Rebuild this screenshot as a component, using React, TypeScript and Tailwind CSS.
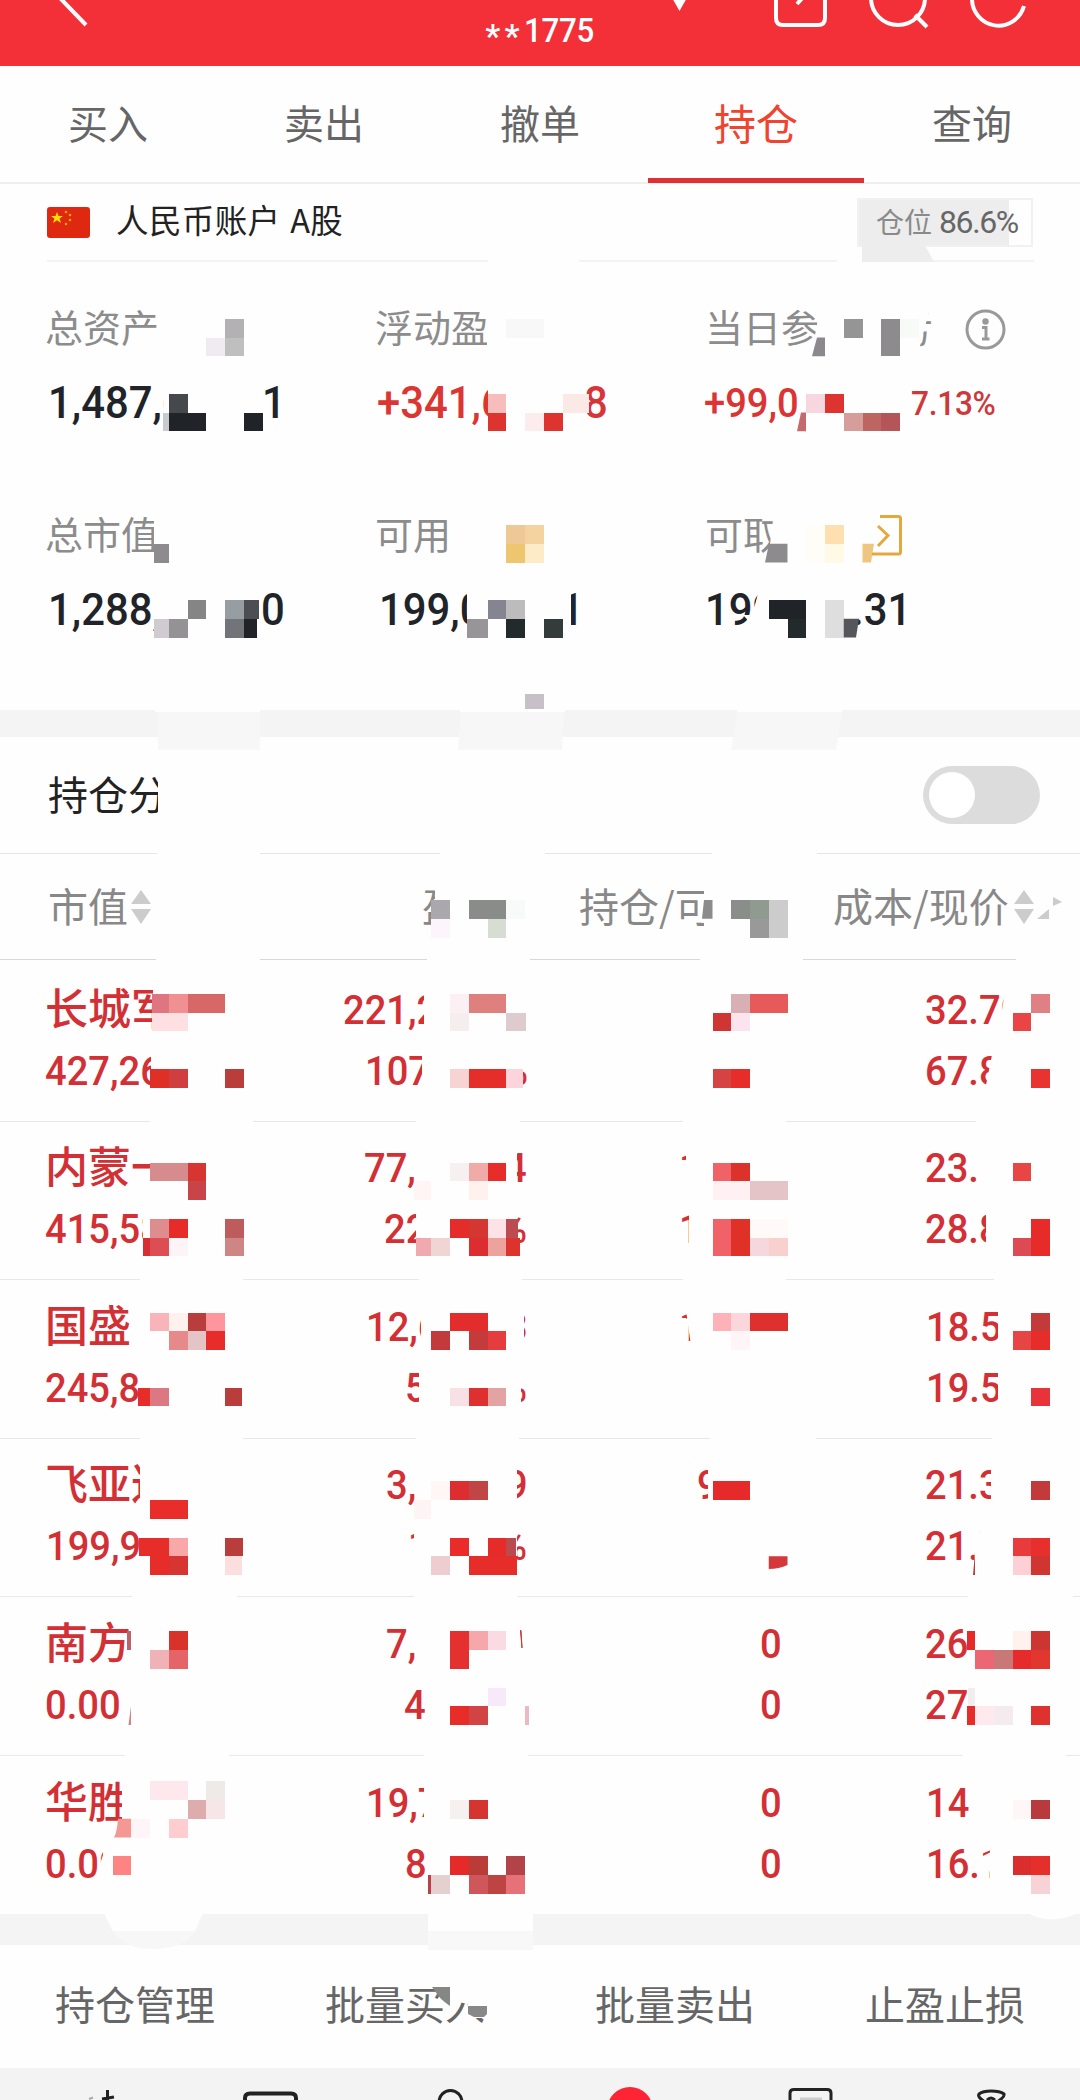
import React from "react";

type Piece = { t: string; c: string };
type Tile = [col: number, row: number, w: number, h: number, color: string];

const CELL = 18.75;

/* Text pieces share one grid cell; each is offset by a margin and cut to a width. */
function Line({ pieces, className, narrow }: { pieces: Piece[]; className: string; narrow?: boolean }) {
  return (
    <div className={"grid items-center " + className}>
      {pieces.map((p, i) => (
        <span key={i} className={"[grid-area:1/1] overflow-hidden whitespace-nowrap " + p.c}>
          {narrow ? <span className="inline-block origin-left scale-x-[0.93]">{p.t}</span> : p.t}
        </span>
      ))}
    </div>
  );
}

const cjk = "font-['Noto_Sans_CJK_SC',sans-serif]";
const num = "font-['Roboto','Noto_Sans_CJK_SC',sans-serif] font-medium";

const tabs = ["买入", "卖出", "撤单", "持仓", "查询"];
const actions = ["持仓管理", "批量买入", "批量卖出", "止盈止损"];

const holdings: { h: string; name: Piece; top: Piece[]; bottom: Piece[] }[] = [
  {
    h: "h-[162px] border-b",
    name: { t: "长城军工", c: "ml-[45px] w-[108px]" },
    top: [
      { t: "221,2", c: "ml-[343px] w-[81px]" },
      { t: "32.70", c: "ml-[925px] w-[80px]" },
    ],
    bottom: [
      { t: "427,26", c: "ml-[45px] w-[106px]" },
      { t: "107", c: "ml-[365px] w-[57px]" },
      { t: "%", c: "ml-[500px] w-[30px]" },
      { t: "67.8", c: "ml-[925px] w-[67px]" },
    ],
  },
  {
    h: "h-[158px] border-b",
    name: { t: "内蒙一", c: "ml-[45px] w-[105px]" },
    top: [
      { t: "77,", c: "ml-[364px] w-[56px]" },
      { t: "4", c: "ml-[505px] w-[24px]" },
      { t: "1", c: "ml-[679px] w-[7px]" },
      { t: "23.", c: "ml-[925px] w-[60px]" },
    ],
    bottom: [
      { t: "415,58", c: "ml-[45px] w-[98px]" },
      { t: "22", c: "ml-[384px] w-[32px]" },
      { t: "%", c: "ml-[499px] w-[30px]" },
      { t: "1", c: "ml-[679px] w-[10px]" },
      { t: "28.8", c: "ml-[925px] w-[61px]" },
    ],
  },
  {
    h: "h-[159px] border-b",
    name: { t: "国盛", c: "ml-[45px] w-[90px]" },
    top: [
      { t: "12,6", c: "ml-[366px] w-[55px]" },
      { t: "3", c: "ml-[506px] w-[24px]" },
      { t: "1", c: "ml-[679px] w-[14px]" },
      { t: "18.5", c: "ml-[926px] w-[72px]" },
    ],
    bottom: [
      { t: "245,8", c: "ml-[45px] w-[94px]" },
      { t: "5", c: "ml-[405px] w-[14px]" },
      { t: "%", c: "ml-[499px] w-[30px]" },
      { t: "19.5", c: "ml-[926px] w-[72px]" },
    ],
  },
  {
    h: "h-[158px] border-b",
    name: { t: "飞亚达", c: "ml-[45px] w-[95px]" },
    top: [
      { t: "3,", c: "ml-[386px] w-[40px]" },
      { t: "9", c: "ml-[506px] w-[24px]" },
      { t: "9", c: "ml-[697px] w-[11px]" },
      { t: "21.3", c: "ml-[925px] w-[66px]" },
    ],
    bottom: [
      { t: "199,9", c: "ml-[46px] w-[94px]" },
      { t: "1", c: "ml-[408px] w-[6px]" },
      { t: "%", c: "ml-[499px] w-[30px]" },
      { t: "21.7", c: "ml-[925px] w-[55px]" },
    ],
  },
  {
    h: "h-[159px] border-b",
    name: { t: "南方", c: "ml-[45px] w-[84px]" },
    top: [
      { t: "7,", c: "ml-[386px] w-[40px]" },
      { t: "0", c: "ml-[760px] w-[28px]" },
      { t: "26", c: "ml-[925px] w-[46px]" },
    ],
    bottom: [
      { t: "0.00", c: "ml-[45px] w-[80px]" },
      { t: "4", c: "ml-[404px] w-[24px]" },
      { t: "0", c: "ml-[760px] w-[28px]" },
      { t: "27", c: "ml-[925px] w-[46px]" },
    ],
  },
  {
    h: "h-[158px]",
    name: { t: "华胜", c: "ml-[45px] w-[77px]" },
    top: [
      { t: "19,7", c: "ml-[366px] w-[58px]" },
      { t: "0", c: "ml-[760px] w-[28px]" },
      { t: "14", c: "ml-[926px] w-[46px]" },
    ],
    bottom: [
      { t: "0.00", c: "ml-[45px] w-[58px]" },
      { t: "8", c: "ml-[405px] w-[24px]" },
      { t: "0", c: "ml-[760px] w-[28px]" },
      { t: "16.1", c: "ml-[926px] w-[64px]" },
    ],
  },
];

/* Mosaic cells, in units of CELL. */
const tiles: Tile[] = [
  [12, 17, 1, 1, "#b3b1b3"], [11, 18, 1, 1, "#f0ebf0"], [12, 18, 1, 1, "#c0bfc0"],
  [9, 21, 1, 1, "#45484d"], [8.68, 22, 0.32, 1, "#c9cace"], [9, 22, 2, 1, "#202429"], [13, 22, 1, 1, "#202429"],
  [27, 17, 2, 1, "#f8f8f8"],
  [26, 21, 1, 1, "#f7bcbc"], [26, 22, 1, 1, "#dd3430"], [28, 22, 1, 1, "#fdecee"], [29, 22, 1, 1, "#dd3430"], [30, 21, 1.4, 1, "#fbe9e5"],
  [45, 17, 1, 1, "#949594"], [47, 17, 1, 2, "#8e8b8f"], [48, 17, 1, 1, "#f7faf6"],
  [43, 21, 1, 1, "#f8d6e0"], [44, 21, 1, 1, "#dd3430"],
  [45, 22, 1, 1, "#d69e9b"], [46, 22, 1, 1, "#bd6560"], [47, 22, 1, 1, "#b4555a"],
  [8.2, 29, 0.8, 1, "#8e8b8f"],
  [27, 28, 1, 1, "#eec896"], [28, 28, 1, 1, "#f5d3a0"], [27, 29, 1, 1, "#eec670"], [28, 29, 1, 1, "#fdebc8"],
  [44, 28, 1, 1, "#fee0b0"], [43, 28, 1, 2, "#fffdf8"], [44, 29, 1, 1, "#fff9e6"],
  [10, 32, 1, 1, "#848584"], [8.2, 33, 0.8, 1, "#d0cbd0"], [9, 33, 1, 1, "#959295"],
  [12, 32, 1, 1, "#969da3"], [13, 32, 0.8, 1, "#4c4e54"], [12, 33, 1, 1, "#727479"], [13, 33, 0.7, 1, "#202429"],
  [26, 32, 1, 1, "#858592"], [27, 32, 1, 1, "#bcbcbc"], [24.9, 33, 1.1, 1, "#989598"], [27, 33, 1, 1, "#232a2b"], [29, 33, 1, 1, "#343b3b"],
  [41, 32, 2, 1, "#202429"], [42, 33, 1, 1, "#232a2b"], [44, 32, 1, 2, "#dededf"],
  [28, 37, 1, 1, "#c8c0c8"],
  [23, 48, 1, 1, "#aba8ad"], [25, 48, 2, 1, "#8a8c89"], [26, 49, 1, 1, "#d7ddd3"], [27, 48, 1, 1, "#f7faf8"], [23, 49, 1, 1, "#fcf6fc"],
  [39, 48, 1, 1, "#8b8d8b"], [40, 48, 1, 1, "#909b90"], [41, 48, 1, 2, "#cccccc"], [40, 49, 1, 1, "#999999"],
  [8.1, 53, 0.9, 1, "#de7580"], [9, 53, 1, 1, "#f09092"], [10, 53, 2, 1, "#d86868"], [8.1, 54, 1.9, 1, "#fee0e3"],
  [8, 57, 1, 1, "#df3028"], [9, 57, 1, 1, "#d03e40"], [12, 57, 1, 1, "#b93e3b"],
  [24, 53, 1, 1, "#fdf0f4"], [25, 53, 2, 1, "#de807d"], [24, 54, 1, 1, "#f4eeef"], [27, 54, 1.05, 1, "#decbcd"],
  [24, 57, 1, 1, "#f7d3d4"], [25, 57, 2, 1, "#e52d29"], [27, 57, 0.9, 1, "#fbd4dc"],
  [39, 53, 1, 1, "#d8b0b4"], [40, 53, 2, 1, "#e65a59"], [38, 54, 1, 1, "#cf3633"], [39, 54, 1, 1, "#fce4ee"],
  [38, 57, 1, 1, "#d64343"], [39, 57, 1, 1, "#e62d29"],
  [55, 53, 1, 1, "#df8184"], [54, 54, 1, 1, "#ea4445"], [55, 57, 1, 1, "#e93330"],
  [8, 62, 2, 1, "#d68c8c"], [10, 62, 1, 1, "#d63531"], [10, 63, 1, 1, "#c94448"],
  [8, 65, 1, 1, "#de8c8e"], [9, 65, 1, 1, "#e52c28"], [7.6, 66, 0.4, 1, "#d52f33"], [8, 66, 1, 1, "#dd4d54"], [9, 66, 1, 1, "#fdf4f7"],
  [12, 65, 1, 1, "#be5b5c"], [12, 66, 1, 1, "#ce8684"],
  [24, 62, 1, 1, "#f6f0f1"], [25, 62, 1, 1, "#f0aba8"], [26, 62, 1, 1, "#e62d29"], [25, 63, 1, 1, "#fff1ee"], [22.1, 63, 0.9, 1, "#fff5f5"],
  [24, 65, 1, 1, "#e42c2a"], [25, 65, 1, 1, "#d43632"], [26, 65, 1, 1, "#fde3e7"], [27, 65, 0.6, 1, "#bb4c52"],
  [22.2, 66, 0.8, 1, "#f0a9ae"], [23, 66, 1, 1, "#efd5d4"], [25, 66, 1, 1, "#dc2e30"], [26, 66, 1, 1, "#eda39d"], [27, 66, 0.73, 1, "#dc332d"],
  [38, 62, 1, 1, "#f06267"], [39, 62, 1, 1, "#db322b"], [38, 63, 2, 1, "#fff0f3"], [40, 63, 2, 1, "#e5c4c8"],
  [38, 65, 1, 2, "#f06267"], [39, 65, 1, 2, "#e03128"], [40, 65, 2, 1, "#fff9f8"], [40, 66, 1, 1, "#f6d7de"], [41, 66, 1, 1, "#f8d0cd"],
  [54, 62, 1, 1, "#e74645"], [55, 65, 1, 2, "#e72b28"], [54, 66, 1, 1, "#dc4b53"],
  [8, 70, 1, 1, "#f8b4b8"], [9, 70, 1, 1, "#fff1ed"], [10, 70, 1, 1, "#b93e3b"], [11, 70, 1, 1, "#ff959d"],
  [9, 71, 1, 1, "#e6898b"], [10, 71, 1, 1, "#e5c4c6"], [11, 71, 1, 1, "#e62d29"],
  [7.38, 74, 0.62, 1, "#e62d29"], [8, 74, 1, 1, "#dc7882"], [12, 74, 0.9, 1, "#b93e3b"],
  [24, 70, 2, 1, "#e32d2c"], [23, 71, 1, 1, "#c23a3c"], [25, 71, 1, 1, "#c43b3c"], [26, 71, 1, 1, "#e53d3e"],
  [24, 74, 1, 1, "#f7e1e4"], [25, 74, 1, 1, "#de302f"], [26, 74, 1, 1, "#e3a3a3"],
  [38, 70, 1, 1, "#fdb2b8"], [39, 70, 1, 1, "#fbd7dc"], [40, 70, 2, 1, "#dd302f"], [39, 71, 1, 1, "#fff5f6"],
  [55, 70, 1, 1, "#c23b3a"], [54, 71, 1, 1, "#e74543"], [55, 71, 1, 1, "#e62d29"], [55, 74, 1, 1, "#e9333b"],
  [8, 80, 2, 1, "#e82d2a"], [7.4, 82, 1.6, 1, "#e62d29"], [9, 82, 1, 1, "#f8a8a8"], [8, 83, 1, 1, "#e62d29"], [9, 83, 1, 1, "#d63531"],
  [12, 82, 0.95, 1, "#b93e3b"], [12, 83, 0.9, 1, "#fcdedf"],
  [23, 79, 1, 1, "#fff6f6"], [24, 79, 1, 1, "#dc2e30"], [25, 79, 1, 1, "#c04544"], [22.1, 80, 0.9, 1, "#fdf4f4"],
  [24, 82, 1, 1, "#e92b29"], [26, 82, 1, 1, "#e52c28"], [27, 82, 0.52, 1, "#ba4a4e"], [25, 83, 2.55, 1, "#e62d29"], [23, 83, 1, 1, "#edcdd0"],
  [38, 79, 2, 1, "#e52a29"],
  [55, 79, 1, 1, "#c33a3a"], [54, 82, 1, 1, "#e83b3c"], [55, 82, 1, 1, "#e7302d"], [54, 83, 1, 1, "#fed0d6"], [55, 83, 1, 1, "#cf3531"],
  [6.78, 87, 0.2, 1, "#b96467"], [9, 87, 1, 1, "#d9322a"], [8, 88, 1, 1, "#eeb2b7"], [9, 88, 1, 1, "#e46468"],
  [24, 87, 1, 2, "#e4302e"], [25, 87, 1, 1, "#f6a7ab"], [26, 87, 1, 1, "#fbdbe3"], [26, 90, 1, 1, "#f7e9f9"],
  [24, 91, 1, 1, "#e82d29"], [25, 91, 1, 1, "#d24444"], [28, 91, 0.2, 1, "#edb8bf"],
  [51.57, 87, 0.43, 1, "#e52b29"], [54, 87, 1, 1, "#fff1ed"], [55, 87, 1, 1, "#cb3632"],
  [52, 88, 1, 1, "#ec6773"], [53, 88, 1, 1, "#c87977"], [54, 88, 1, 1, "#e52b2c"], [55, 88, 1, 1, "#e1372f"],
  [51.6, 90, 0.4, 1, "#f1eeee"], [51.55, 91, 0.45, 1, "#e62d29"], [52, 91, 1, 1, "#fde9ee"], [53, 91, 1, 1, "#f4ebee"], [55, 91, 1, 1, "#de322f"],
  [8, 95, 2, 1, "#ffe8ed"], [11, 95, 1, 1, "#eeeae8"], [10, 96, 1, 1, "#dcadac"], [11, 96, 1, 1, "#f7e6e8"],
  [7, 97, 1, 1, "#fff5f8"], [9, 97, 1, 1, "#fecdd0"], [6, 99, 1, 1, "#fd8483"],
  [24, 96, 1, 1, "#f7f0f0"], [25, 96, 1, 1, "#d6352f"], [24, 99, 1, 1, "#e42b29"], [25, 99, 1, 1, "#b93c39"], [27, 99, 1, 1, "#b24449"],
  [22.8, 100, 0.2, 1, "#b94046"], [23, 100, 1, 1, "#e4d0ce"], [25, 100, 1, 1, "#cf565a"], [26, 100, 1, 1, "#bd4442"], [27, 100, 1, 1, "#e77178"],
  [54, 96, 1, 1, "#fff7f7"], [55, 96, 1, 1, "#b93a3c"], [54, 99, 1, 1, "#d92e2d"], [55, 99, 1, 1, "#e52f2b"], [55, 100, 1, 1, "#f8d3d5"],
];

/* Erased areas: x, y, width, height. */
const erased: [number, number, number, number][] = [
  [488, 260, 91, 3], [837, 260, 25, 3],
  [157, 852, 103, 3], [440, 852, 105, 3], [712, 852, 105, 3],
  [156, 958, 104, 3], [427, 958, 103, 3], [700, 958, 103, 3], [1016, 958, 64, 3],
  [150, 1120, 103, 3], [416, 1120, 104, 3], [683, 1120, 103, 3], [976, 1120, 104, 3],
  [140, 1278, 103, 3], [419, 1278, 103, 3], [683, 1278, 103, 3], [994, 1278, 86, 3],
  [140, 1437, 103, 3], [416, 1437, 103, 3], [710, 1437, 106, 3], [992, 1437, 88, 3],
  [132, 1595, 105, 3], [414, 1595, 104, 3], [968, 1595, 105, 3],
  [125, 1754, 104, 3], [424, 1754, 104, 3], [962, 1754, 104, 3],
  [493, 1050, 29, 40], [493, 1205, 24, 45], [493, 1140, 24, 50],
  [493, 1365, 28, 42], [493, 1522, 24, 50], [500, 1460, 17, 50], [500, 1300, 24, 50],
];

function Overlay() {
  return (
    <svg className="pointer-events-none absolute inset-0" width="1080" height="2100" viewBox="0 0 1080 2100">
      <g fill="#fefefe">
        {erased.map(([x, y, w, h], i) => (
          <rect key={i} x={x} y={y} width={w} height={h} />
        ))}
        <path d="M1006 990V1024H1000L1005 990Z" />
        <path d="M993 1050H1000V1090H985Z" />
        <path d="M822 300H914V350H812Z" />
        <path d="M913 300L932 300L919 350H912Z" />
        <path d="M774 512L768 560H800V512Z" />
        <path d="M686 1310L691 1346H698V1306H686Z" />
        <path d="M686 1318L679 1318V1346H687Z" />
        <path d="M488 310H520V350H488Z" />
        <path d="M679 1160H690V1190H679Z" />
        <path d="M104 1852L98 1870L97 1885H112V1852Z" />
        <path d="M981 1857L991 1874V1852Z" />
        <path d="M978 1868L985 1865V1885H978Z" />
        <path d="M759 590L753 612V630H765V590Z" />
        <path d="M743 615H760V630H757Z" />
        <path d="M982 1540L976 1530L974 1565H990V1540Z" />
      </g>
      <g shapeRendering="crispEdges">
        {tiles.map(([c, r, w, h, color], i) => (
          <rect key={i} x={c * CELL} y={r * CELL} width={w * CELL} height={h * CELL} fill={color} />
        ))}
      </g>
      <path d="M817 337.500H825V356.250H812Z" fill="#8c898e" />
      <path d="M801 412.500H806V431.250H797Z" fill="#c46a6e" />
      <path d="M769 543.750H787.500V562.500H765Z" fill="#8e8b8f" />
      <path d="M862.500 543.750H874L871 562.500H862.500Z" fill="#eec680" />
      <path d="M843.750 618.750H859L856 637.500H843.750Z" fill="#55575c" />
      <path d="M704 900H712.500V918.750H702Z" fill="#8b8b8b" />
      <path d="M768.750 1556.250H787.500V1565Q779 1569 768.750 1569Z" fill="#d4383b" />
      <path d="M975 1552V1575H973Z" fill="#b93e3b" />
      <path d="M131 1706V1725H128.500Z" fill="#d88080" />
      <path d="M118 1818.750H131V1837.500H114Q117 1832 118 1818.750Z" fill="#f59792" />
      <path d="M520.500 1630L522 1648L521 1631Z" stroke="#c33a3a" />
      {/* Pale patches over the divider bands */}
      <path d="M155 709H260V712H155ZM460 709H565V712H460ZM737 709H842V712H737Z" fill="#fefefe" />
      <path d="M157 712H260V750H158ZM461 712H564L562 750H458ZM737 712H842L836 750H731Z" fill="#f7f7f7" />
      <path d="M104 1913H203Q197 1949 153 1949Q114 1949 104 1913Z" fill="#f7f7f7" />
      <path d="M104 1913H203L195 1931H113Z" fill="#fefefe" />
      <path d="M428 1931H533V1950H428Z" fill="#f8f8f8" />
      <path d="M428 1913H533V1931H428Z" fill="#fefefe" />
      <path d="M1028 1913Q1050 1926 1078 1913Z" fill="#fefefe" />
      {/* Patch under the position badge */}
      <path d="M862 238H921L934 262H862Z" fill="#ededed" />
      {/* Sort arrow remains */}
      <path d="M1049 909V919H1037ZM1053 897L1062 902L1053 906Z" fill="#cccccc" />
      {/* Patches over the batch-buy label */}
      <path d="M449 1985H485V2006H487V2018H468V2004L449 2000Z" fill="#fefefe" />
      <path d="M432 1987H450V2006Q440 1999 437 1994Z" fill="#858785" />
      <path d="M468 2006H487V2014L484 2017H474L468 2014Z" fill="#888888" />
    </svg>
  );
}

function Sort() {
  return (
    <svg width="20" height="34" viewBox="0 0 20 34" fill="#cccccc" className="shrink-0">
      <path d="M10 0L20 14H0ZM0 19H20L10 34Z" />
    </svg>
  );
}

export default function App() {
  return (
    <div className={"relative h-[2100px] w-[1080px] overflow-hidden bg-[#fefefe] " + cjk}>
      <header className="h-[66px] bg-[#f33038]">
        <div className="relative flex h-[66px] justify-center">
          <svg className="absolute inset-0" width="1080" height="66" viewBox="0 0 1080 66" fill="none" stroke="#fff" strokeWidth="4">
            <path d="M60 -2L86 25" />
            <path d="M671 -4H688L679.500 11Z" fill="#fff" stroke="none" />
            <path d="M776 -5V18Q776 25 783 25H818Q825 25 825 18V-5M797 4L805 -5" />
            <circle cx="898" cy="-2" r="27" />
            <path d="M915 15L927 27" />
            <path d="M972 -2A26.500 27 0 0 0 1024 6" />
          </svg>
          <div className={"mt-[12px] flex h-9 items-center text-[34px] text-white " + num}>
            <span className="mt-[12px] tracking-[4px]">**</span>
            <span className="-mr-[5px] origin-left scale-x-[0.92] tracking-[-0.3px]">1775</span>
          </div>
        </div>
      </header>

      <nav className="flex h-[118px] border-b-2 border-[#efefef] text-[40px] text-[#666]">
        {tabs.map((t) => (
          <div
            key={t}
            className={
              "flex h-[117px] flex-1 flex-col items-center justify-center " +
              (t === "持仓" ? "border-b-5 border-[#e03033] pt-1 text-[42px] text-[#f0442f]" : "")
            }
          >
            <span className="-mt-[5px]">{t}</span>
          </div>
        ))}
      </nav>

      <section className="ml-[47px] mr-[46px] flex h-[78px] items-center border-b-2 border-[#f3f3f3]">
        <svg width="43" height="31" viewBox="0 0 43 31">
          <rect width="43" height="31" rx="3" fill="#de2910" />
          <path d="M10 5L11.500 9H16L12.500 11.500L14 16L10 13.200L6 16L7.500 11.500L4 9H8.500Z" fill="#ffde00" />
          <g fill="#f5a500">
            <circle cx="19" cy="5" r="1.300" />
            <circle cx="23" cy="8" r="1.300" />
            <circle cx="23" cy="13" r="1.300" />
            <circle cx="19" cy="17" r="1.300" />
          </g>
        </svg>
        <span className="ml-[26px] -mt-1.5 text-[32.5px] tracking-[0.4px] text-[#222] [word-spacing:2px]">人民币账户 A股</span>
        <div className="ml-auto mr-px flex h-[49px] w-[176px] items-center whitespace-nowrap border-2 border-[#f1f1f1] bg-[linear-gradient(90deg,#ededed_150px,#fefefe_150px)] pl-[17px] text-[28px] text-[#8a8a8a]">
          <span className="-mt-[3px]">仓位</span>
          <span className="ml-[7px] font-['Roboto'] text-[32px] tracking-[-1.4px] text-[#666]">86.6%</span>
        </div>
      </section>

      <section className="h-[448px] pt-[36px] text-[#202429]">
        <Line
          className="h-[56px] text-[38px] leading-[56px] text-[#8c8c8c]"
          pieces={[
            { t: "总资产", c: "ml-[45px] w-[140px]" },
            { t: "浮动盈", c: "ml-[375px] w-[112px]" },
            { t: "当日参考盈亏", c: "ml-[705px] w-[231px]" },
          ]}
        />
        <Line
          narrow
          className={"mt-[21px] h-[56px] text-[45px] leading-[56px] " + num}
          pieces={[
            { t: "1,487,6", c: "ml-[48px] w-[116px]" },
            { t: "1", c: "ml-[262px] w-[30px]" },
            { t: "+341,6", c: "ml-[377px] w-[111px] text-[#dc3633]" },
            { t: "8", c: "ml-[584px] w-[26px] text-[#d63638]" },
            { t: "+99,0", c: "ml-[704px] w-[96px] text-[41px] text-[#dc3433]" },
            { t: "7.13%", c: "ml-[911px] w-[100px] text-[34px] text-[#cf383a] tracking-[-0.3px]" },
          ]}
        />
        <Line
          className="mt-[74px] h-[56px] text-[38px] leading-[56px] text-[#8c8c8c]"
          pieces={[
            { t: "总市值", c: "ml-[45px] w-[109px]" },
            { t: "可用", c: "ml-[375px] w-[90px]" },
            { t: "可取", c: "ml-[705px] w-[68px]" },
          ]}
        />
        <Line
          narrow
          className={"mt-[21px] h-[56px] text-[45px] leading-[56px] " + num}
          pieces={[
            { t: "1,288,", c: "ml-[48px] w-[106px]" },
            { t: "0", c: "ml-[261px] w-[28px]" },
            { t: "199,0", c: "ml-[379px] w-[88px]" },
            { t: "1", c: "ml-[560px] w-[24px] [clip-path:inset(0_0_0_11px)]" },
            { t: "199", c: "ml-[705px] w-[56px]" },
            { t: ".31", c: "ml-[852px] w-[60px]" },
          ]}
        />
      </section>

      <div className="h-[27px] bg-[#f4f4f4]" />

      <section className="flex h-[117px] items-center justify-between border-b border-[#e6e6e6] pl-[48px] pr-[40px]">
        <span className="-mt-[4px] w-[110px] overflow-hidden whitespace-nowrap text-[40px] text-[#222]">持仓分布</span>
        <div className="flex h-[58px] w-[117px] items-center rounded-full bg-[#dcdcdc] pl-[6px]">
          <div className="size-[46px] rounded-full bg-white" />
        </div>
      </section>

      <section className="grid h-[106px] grid-cols-[371px_208px_254px_247px] items-center border-b border-[#d8d8d8] text-[40px] text-[#888]">
        <div className="flex items-center gap-[3px] pl-[48px]">
          <span className="-mt-[3px]">市值</span>
          <Sort />
        </div>
        <div className="-mt-[3px] ml-[51px] w-[13px] overflow-hidden whitespace-nowrap">盈</div>
        <div className="-mt-[3px] w-[125px] overflow-hidden whitespace-nowrap">持仓/可</div>
        <div className="flex items-center gap-[5px] whitespace-nowrap">
          <span className="-mt-[3px]">成本/现价</span>
          <Sort />
        </div>
      </section>

      <main className="text-[#d33035]">
        {holdings.map((r, i) => (
          <div key={i} className={"flex flex-col justify-end border-[#e8e8e8] pb-[16px] " + r.h}>
            <div className="grid">
              <Line className="-mt-1 h-[56px] text-[43px] font-medium leading-[56px] [grid-area:1/1]" pieces={[r.name]} />
              <Line narrow className={"h-[56px] text-[41px] leading-[56px] [grid-area:1/1] " + num} pieces={r.top} />
            </div>
            <Line narrow className={"h-[67px] text-[41px] leading-[67px] " + num} pieces={r.bottom} />
          </div>
        ))}
      </main>

      <div className="h-[31px] bg-[#f4f4f4]" />

      <section className="grid h-[123px] grid-cols-4 items-center text-center text-[40px] text-[#666]">
        {actions.map((a) => (
          <span key={a} className="-mt-[8px]">{a}</span>
        ))}
      </section>

      <footer className="h-[32px] bg-[#f3f3f3]">
        <svg width="1080" height="32" viewBox="0 0 1080 32" fill="none" stroke="#222" strokeWidth="3">
          <path d="M107.500 22V32M102 31L114 29" />
          <path d="M89 31L93 29.500" stroke="#aaa" strokeWidth="2" />
          <path d="M245 34V30Q245 25.500 250 25.500H291Q296 25.500 296 30V34" strokeWidth="4" />
          <circle cx="450.500" cy="34" r="11.500" />
          <circle cx="630" cy="42" r="23" fill="#ff2434" stroke="none" />
          <path d="M790 34V25Q790 21.500 794 21.500H827Q831 21.500 831 25V34" />
          <path d="M800 31H822" stroke="#ccc" />
          <path d="M985 34Q977 29 979 26Q983 23 991 23Q1000 23 1004 26Q1005 29 997 34" />
          <path d="M987 32Q991 28 995 32" />
        </svg>
      </footer>

      <Overlay />
      <svg className="absolute left-[965px] top-[308px]" width="42" height="42" viewBox="0 0 42 42" fill="none" stroke="#999" strokeWidth="3">
        <circle cx="20.500" cy="21.500" r="18.500" />
        <circle cx="20.500" cy="13.500" r="3.200" fill="#999" stroke="none" />
        <path d="M17 19.500H21V31M17 31H24.500" />
      </svg>
      <svg className="absolute left-[870px] top-[512px]" width="36" height="46" viewBox="0 0 36 46" fill="none" stroke="#e3a93f" strokeWidth="3">
        <path d="M10 4.500H28.500Q30.500 4.500 30.500 6.500V40Q30.500 42 28.500 42H2" />
        <path d="M8 14L18 23.500L8 34" />
      </svg>
    </div>
  );
}
